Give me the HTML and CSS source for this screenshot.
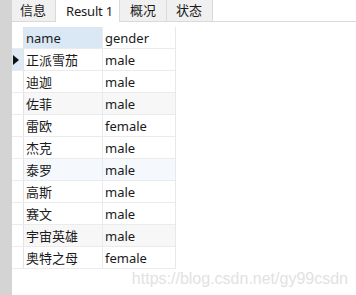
FILE: index.html
```html
<!DOCTYPE html>
<html lang="zh">

<head>
    <meta charset="UTF-8">
    <title>Result 1</title>
    <link rel="stylesheet" href="styles.css">
</head>

<body>
    <div class="side"></div>

    <div class="main">
        <!-- Tabs -->
        <div class="tabs">
            <div class="tab">信息</div>
            <div class="tab active">Result 1</div>
            <div class="tab">概况</div>
            <div class="tab">状态</div>
        </div>

        <!-- Result grid -->
        <div class="grid">
            <div class="row head">
                <div class="mark"></div>
                <div class="cell name">name</div>
                <div class="cell">gender</div>
            </div>
            <div class="row">
                <div class="mark current"><span class="arrow"></span></div>
                <div class="cell">正派雪茄</div>
                <div class="cell">male</div>
            </div>
            <div class="row">
                <div class="mark"></div>
                <div class="cell">迪迦</div>
                <div class="cell">male</div>
            </div>
            <div class="row alt">
                <div class="mark"></div>
                <div class="cell">佐菲</div>
                <div class="cell">male</div>
            </div>
            <div class="row">
                <div class="mark"></div>
                <div class="cell">雷欧</div>
                <div class="cell">female</div>
            </div>
            <div class="row">
                <div class="mark"></div>
                <div class="cell">杰克</div>
                <div class="cell">male</div>
            </div>
            <div class="row hover">
                <div class="mark"></div>
                <div class="cell">泰罗</div>
                <div class="cell">male</div>
            </div>
            <div class="row">
                <div class="mark"></div>
                <div class="cell">高斯</div>
                <div class="cell">male</div>
            </div>
            <div class="row">
                <div class="mark"></div>
                <div class="cell">赛文</div>
                <div class="cell">male</div>
            </div>
            <div class="row alt">
                <div class="mark"></div>
                <div class="cell">宇宙英雄</div>
                <div class="cell">male</div>
            </div>
            <div class="row">
                <div class="mark"></div>
                <div class="cell">奥特之母</div>
                <div class="cell">female</div>
            </div>
        </div>

        <div class="watermark">https://blog.csdn.net/gy99csdn</div>
    </div>
</body>

</html>
```

FILE: styles.css
```css
body {
    margin: 0;
    display: flex;
    height: 295px;
    background: white;
    font-family: "Noto Sans", "Noto Sans CJK SC", sans-serif;
    font-size: 13px;
    color: #1a1a1a;
    overflow: hidden;
}

/* Left strip */
.side {
    width: 12px;
    flex-shrink: 0;
    background: #d4d4d4;
}

.main {
    flex: 1;
    display: flex;
    flex-direction: column;
}

/* Tabs */
.tabs {
    display: flex;
    height: 21px;
    border-bottom: 1px solid #dadada;
}

.tab {
    box-sizing: border-box;
    display: flex;
    align-items: center;
    padding-left: 8px;
    width: 44px;
    height: 21px;
    background: #f0f0f0;
    border-right: 1px solid #dadada;
    white-space: nowrap;
    line-height: 1;
}

.tab.active {
    background: white;
    height: 22px;
    width: 64px;
    padding-left: 10px;
    letter-spacing: -0.2px;
}

.tab:nth-child(3) {
    width: 47px;
    padding-left: 10px;
}

.tab:nth-child(4) {
    width: 46px;
    padding-left: 9px;
}

/* Grid */
.grid {
    margin-top: 5px;
    width: 163px;
    border-right: 1px solid #e8e8e8;
}

.row {
    display: flex;
    height: 21px;
    border-bottom: 1px solid #ebebeb;
}

.row.alt {
    background: #f7f7f7;
}

.row.hover {
    background: #f5f9fd;
}

.row.head .cell.name {
    background: #dae8f5;
}

.mark {
    width: 11px;
    border-right: 1px solid #e3e3e3;
    display: flex;
    align-items: center;
    background: white;
}

.mark.current {
    background: #dde9f5;
}

.arrow {
    width: 0;
    height: 0;
    border-top: 5px solid transparent;
    border-bottom: 5px solid transparent;
    border-left: 6px solid #111;
    margin-left: 1px;
}

.cell {
    display: flex;
    align-items: center;
    padding-left: 2px;
    width: 76px;
    border-right: 1px solid #ebebeb;
    white-space: nowrap;
}

.cell:last-child {
    width: 70px;
    border-right: none;
}

.watermark {
    align-self: flex-end;
    margin: 1px 8px 0 0;
    font-family: "Liberation Sans", sans-serif;
    font-size: 16px;
    color: #e2e2e2;
    white-space: nowrap;
}
```
